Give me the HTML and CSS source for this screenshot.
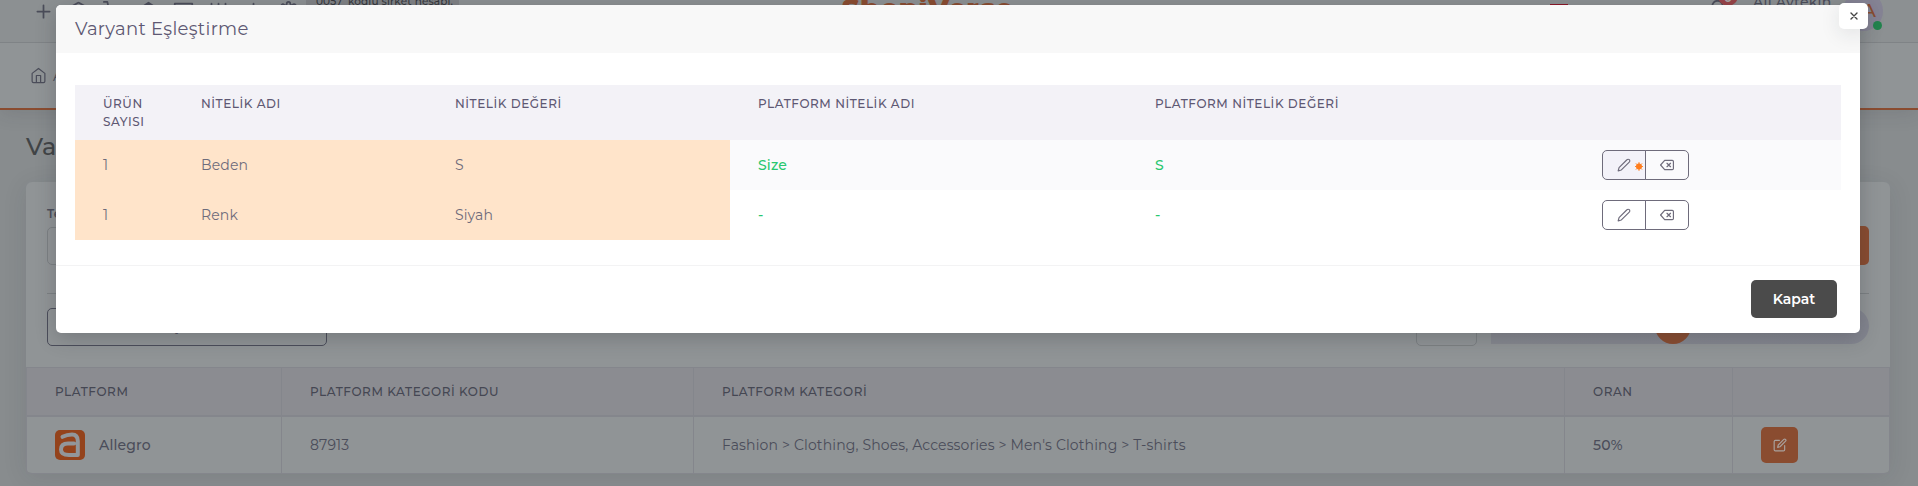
FILE: index.html
```html
<!DOCTYPE html>
<html lang="tr">
<head>
<meta charset="utf-8">
<title>Varyant Eşleştirme</title>
<link rel="stylesheet" href="styles.css">
</head>
<body>
<svg class="defs" width="0" height="0">
  <symbol id="pencil" viewBox="0 0 24 24"><path d="M17 3a2.83 2.83 0 1 1 4 4L7.500 20.500 2 22l1.500-5.500z"/></symbol>
  <symbol id="delete" viewBox="0 0 24 24"><path d="M21 4H8l-7 8 7 8h13a2 2 0 0 0 2-2V6a2 2 0 0 0-2-2zM18 9l-6 6M12 9l6 6"/></symbol>
</svg>
<div class="page">
  <header class="navbar">
    <div class="tools">
      <svg class="ico" viewBox="0 0 24 24"><path d="M12 5v14M5 12h14"/></svg>
      <svg class="ico" viewBox="0 0 24 24"><path d="M21 16V8a2 2 0 0 0-1-1.730l-7-4a2 2 0 0 0-2 0l-7 4A2 2 0 0 0 3 8v8"/></svg>
      <svg class="ico" viewBox="0 0 24 24"><circle cx="9" cy="21" r="1"/><circle cx="20" cy="21" r="1"/><path d="M1 1h4l2.680 13.390a2 2 0 0 0 2 1.610h9.720a2 2 0 0 0 2-1.610L23 6H6"/></svg>
      <svg class="ico" viewBox="0 0 24 24"><path d="M12 2l10 6.500v7L12 22 2 15.500v-7zM12 22v-6.500M22 8.500l-10 7-10-7M2 15.500l10-7 10 7M12 2v6.500"/></svg>
      <svg class="ico" viewBox="0 0 24 24"><path d="M2 14V3h20v11M2 7h20"/></svg>
      <svg class="ico" viewBox="0 0 24 24"><path d="M4 3v7M12 3v9M20 3v9"/></svg>
      <svg class="ico" viewBox="0 0 24 24"><path d="M12 3v6"/></svg>
      <svg class="ico" viewBox="0 0 24 24"><circle cx="12" cy="12" r="3"/><path d="M19.400 15a1.650 1.650 0 0 0 .33 1.820l.06.060a2 2 0 1 1-2.830 2.830l-.06-.060a1.650 1.650 0 0 0-2.820 1.170V21a2 2 0 0 1-4 0v-.090A1.650 1.650 0 0 0 7.180 19.730l-.06.060a2 2 0 1 1-2.830-2.830l.06-.060A1.650 1.650 0 0 0 3.090 14H3a2 2 0 0 1 0-4h.09A1.650 1.650 0 0 0 4.270 7.180l-.06-.060a2 2 0 1 1 2.830-2.830l.06.060A1.650 1.650 0 0 0 10 3.090V3a2 2 0 0 1 4 0v.090a1.650 1.650 0 0 0 2.820 1.170l.06-.060a2 2 0 1 1 2.830 2.830l-.06.060A1.650 1.650 0 0 0 20.910 10H21a2 2 0 0 1 0 4h-.09a1.650 1.650 0 0 0-1.510 1z"/></svg>
      <span class="account"><span>0057 'kodlu şirket hesabı.</span></span>
    </div>
    <div class="brand">ShopiVerse</div>
    <div class="user">
      <span class="flag"></span>
      <span class="bell"><svg class="ico" viewBox="0 0 24 24"><path d="M6 12V8a6 6 0 0 1 12 0v4"/></svg><b>0</b></span>
      <span class="name">Ali Aytekin</span>
      <span class="avatar">A<i></i></span>
    </div>
  </header>
  <nav class="crumbs">
    <svg viewBox="0 0 24 24"><path d="M3 9l9-7 9 7v11a2 2 0 0 1-2 2H5a2 2 0 0 1-2-2zM9 22V12h6v10"/></svg>
    <span>A</span>
  </nav>
  <h1>Va</h1>
  <section class="card">
    <div class="filters">
      <label>Te</label>
      <div class="field-row"><div class="field"></div><div class="search"></div></div>
      <hr>
      <div class="actions">
        <div class="outline">Yeni Eşleme</div>
        <div class="right"><div class="page-size"></div><div class="pager"><i></i></div></div>
      </div>
    </div>
    <div class="grid head">
      <div><span>PLATFORM</span></div><div><span>PLATFORM KATEGORİ KODU</span></div><div><span>PLATFORM KATEGORİ</span></div><div><span>ORAN</span></div><div></div>
    </div>
    <div class="grid row">
      <div class="platform">
        <svg class="logo" viewBox="0 0 30 30"><rect width="30" height="30" rx="5" fill="#94431c"/><path d="M7.500 6.800Q12 4.500 17 4.500Q22.800 4.500 22.800 11V25H14Q6 25 6 19.500Q6 13.500 13 13.500H19" fill="none" stroke="#92969a" stroke-width="4"/></svg>
        <span class="strong">Allegro</span>
      </div>
      <div><span>87913</span></div>
      <div><span>Fashion &gt; Clothing, Shoes, Accessories &gt; Men's Clothing &gt; T-shirts</span></div>
      <div><span class="strong">50%</span></div>
      <div class="edit"><span><svg viewBox="0 0 24 24"><path d="M11 4H4a2 2 0 0 0-2 2v14a2 2 0 0 0 2 2h14a2 2 0 0 0 2-2v-7"/><path d="M18.500 2.500a2.120 2.120 0 0 1 3 3L12 15l-4 1 1-4z"/></svg></span></div>
    </div>
  </section>
</div>

<div class="modal">
  <div class="modal-head"><span>Varyant Eşleştirme</span></div>
  <div class="close"><svg viewBox="0 0 8 8"><path d="M1 1l6 6M7 1L1 7"/></svg></div>
  <div class="modal-body">
    <div class="mgrid mhead">
      <div><span>ÜRÜN<br>SAYISI</span></div><div><span>NİTELİK ADI</span></div><div><span>NİTELİK DEĞERİ</span></div><div><span>PLATFORM NİTELİK ADI</span></div><div><span>PLATFORM NİTELİK DEĞERİ</span></div><div></div>
    </div>
    <div class="mgrid mrow odd">
      <div class="hl">1</div><div class="hl">Beden</div><div class="hl">S</div><div class="ok">Size</div><div class="ok">S</div>
      <div class="btns"><span class="btn active"><svg><use href="#pencil"/></svg><svg class="spark" viewBox="0 0 9 9"><path d="M4.500 0v9M0 4.500h9M1.300 1.300l6.400 6.400M7.700 1.300L1.300 7.700"/><circle cx="4.500" cy="4.500" r="3"/></svg></span><span class="btn"><svg><use href="#delete"/></svg></span></div>
    </div>
    <div class="mgrid mrow">
      <div class="hl">1</div><div class="hl">Renk</div><div class="hl">Siyah</div><div class="ok">-</div><div class="ok">-</div>
      <div class="btns"><span class="btn"><svg><use href="#pencil"/></svg></span><span class="btn"><svg><use href="#delete"/></svg></span></div>
    </div>
  </div>
  <div class="modal-foot"><button>Kapat</button></div>
</div>
</body>
</html>
```
FILE: styles.css
```css
* { box-sizing: border-box; }
body { margin: 0; height: 486px; overflow: hidden; position: relative; background: #888c8e; font-family: Montserrat, Inter, sans-serif; font-size: 14px; letter-spacing: .14px; color: #6e6b7b; }
.defs { position: absolute; }
svg { fill: none; stroke: currentColor; stroke-width: 2; stroke-linecap: round; stroke-linejoin: round; }
span { white-space: nowrap; }
.page { height: 486px; overflow: hidden; color: #4b4d5a; }
.navbar { height: 43px; border-bottom: 1px solid #7f8386; background: #8c9092; display: flex; justify-content: space-between; align-items: flex-start; position: relative; }
.tools { display: flex; padding-left: 33px; gap: 14px; }
.ico { width: 21px; height: 21px; margin-top: 1px; flex: none; }
.account { height: 13px; width: 153px; margin-left: -7px; background: #7f8285; padding-left: 10px; font-size: 10.5px; font-weight: 500; line-height: 12px; letter-spacing: .12px; color: #35373c; }
.account span { display: block; margin-top: -4px; }
.brand { position: absolute; left: 842px; top: -5px; font: 900 27px/27px Montserrat, Inter, sans-serif; letter-spacing: .6px; color: #8a4c30; }
.user { display: flex; padding-right: 35px; align-items: flex-start; }
.flag { width: 18px; height: 1px; margin-top: 4px; background: #8a1525; margin-right: 143px; }
.bell { width: 42px; position: relative; }
.bell .ico { margin: -1px 0 0 -4px; }
.bell b { position: absolute; left: 7px; top: -14px; width: 20px; height: 20px; border-radius: 50%; background: #974347; color: #aaa; font-size: 11px; line-height: 24px; text-align: center; }
.name { font-weight: 500; font-size: 14px; line-height: 14px; margin-top: -5px; width: 90px; letter-spacing: .25px; }
.avatar { width: 40px; height: 40px; margin-top: -9px; border-radius: 50%; background: #858394; color: #8a4c30; font-size: 19px; font-weight: 500; line-height: 40px; padding-left: 19px; position: relative; }
.avatar i { position: absolute; right: 1px; bottom: 1px; width: 9px; height: 9px; border-radius: 50%; background: #23844e; }
.crumbs { height: 67px; background: #909496; border-bottom: 2px solid #8a4c30; display: flex; align-items: center; padding: 0 0 0 30px; gap: 6px; box-shadow: 0 4px 18px rgba(40,45,50,.12); }
.crumbs svg { width: 17px; height: 17px; stroke-width: 1.7; }
h1 { margin: 21px 0 0 26px; font-size: 24px; line-height: 32px; font-weight: 500; color: #414446; height: 51px; }
.card { margin: 0 28px 0 26px; height: 291px; background: #909496; border-radius: 6px; box-shadow: 0 4px 24px rgba(34,41,47,.1); }
.filters { height: 185px; padding: 22px 21px 0 21px; }
label { display: block; font-size: 12px; font-weight: 600; line-height: 20px; height: 23px; }
.field-row { display: flex; justify-content: space-between; height: 38px; }
.field { width: 400px; border: 1px solid #7c8083; border-radius: 5px; }
.search { width: 120px; background: #8a4c30; border-radius: 5px; margin-top: -1px; }
hr { margin: 28px 0 14px; border: 0; border-top: 1px solid #7c8083; }
.actions { display: flex; justify-content: space-between; }
.outline { width: 280px; height: 38px; border: 1px solid #4b4d5a; border-radius: 5px; text-align: center; line-height: 34px; font-weight: 500; padding-right: 28px; }
.right { display: flex; gap: 14px; }
.page-size { width: 61px; height: 38px; border: 1px solid #7c8083; border-radius: 5px; }
.pager { width: 378px; height: 36px; background: linear-gradient(to right, #86888f, #83858f); border-radius: 0 18px 18px 0; padding-left: 164px; }
.pager i { display: block; width: 36px; height: 36px; background: #8a4c30; border-radius: 50%; }
.grid { display: grid; grid-template-columns: 255px 412px 871px 168px 1fr; }
.grid > div { border-left: 1px solid #84868c; padding-left: 28px; display: flex; align-items: center; }
.grid > div:last-child { border-right: 1px solid #84868c; }
.head { height: 50px; background: #8b8c91; border-top: 1px solid #84868c; border-bottom: 2px solid #84868c; font-size: 12px; font-weight: 500; letter-spacing: .57px; color: #454753; }
.row { height: 57px; border-bottom: 1px solid #84868c; }
.strong { font-weight: 500; }
.platform { gap: 14px; }
.logo { width: 30px; height: 30px; stroke: none; }
.edit > span { width: 37px; height: 36px; background: #8a4c30; border-radius: 5px; display: grid; place-items: center; color: #a9a19d; }
.edit svg { width: 14px; height: 14px; }

.modal { position: absolute; left: 56px; top: 5px; width: 1804px; height: 328px; background: #fff; border-radius: 5px; box-shadow: 0 5px 20px rgba(34,41,47,.25); }
.modal-head { height: 48px; background: #f8f8f8; border-radius: 5px 5px 0 0; padding-left: 19px; line-height: 48px; font-size: 18px; letter-spacing: .32px; color: #5e5873; }
.close { position: absolute; right: -8px; top: -2px; width: 29px; height: 26px; border-radius: 5px; background: #fff; box-shadow: 0 5px 20px rgba(34,41,47,.1); display: grid; place-items: center; color: #444; }
.close svg { width: 8px; height: 8px; stroke-width: 1.4; }
.modal-body { height: 213px; padding: 32px 19px 0; border-bottom: 1px solid #f3f3f4; }
.mgrid { display: grid; grid-template-columns: 98px 254px 303px 397px 447px 1fr; }
.mgrid > div { padding-left: 28px; }
.mhead { height: 55px; background: #f3f2f7; padding-top: 10px; font-size: 12px; line-height: 18px; font-weight: 500; letter-spacing: .56px; color: #5e5873; }
.mrow { height: 50px; line-height: 50px; }
.mrow > div { height: 50px; }
.odd { background: #fafafc; }
.hl { background: #ffe4ca; }
.ok { color: #28c76f; font-weight: 500; }
.btns { display: flex; align-items: center; }
.btn { position: relative; width: 44px; height: 30px; border: 1px solid #6e6b7b; border-radius: 5px 0 0 5px; display: grid; place-items: center; }
.btn + .btn { margin-left: -1px; border-radius: 0 5px 5px 0; }
.btn svg { width: 14px; height: 14px; }
.active { background: #f3f2f9; }
.btn .spark { position: absolute; left: 32px; top: 11px; width: 8px; height: 9px; stroke: #ff7d1e; stroke-width: 1; fill: #ff7d1e; }
.modal-foot { display: flex; justify-content: flex-end; padding: 14px 23px 0 0; }
button { width: 86px; height: 38px; border: 0; border-radius: 5px; background: #4b4b4b; color: #fff; font: 600 14px Montserrat, Inter, sans-serif; }
```
